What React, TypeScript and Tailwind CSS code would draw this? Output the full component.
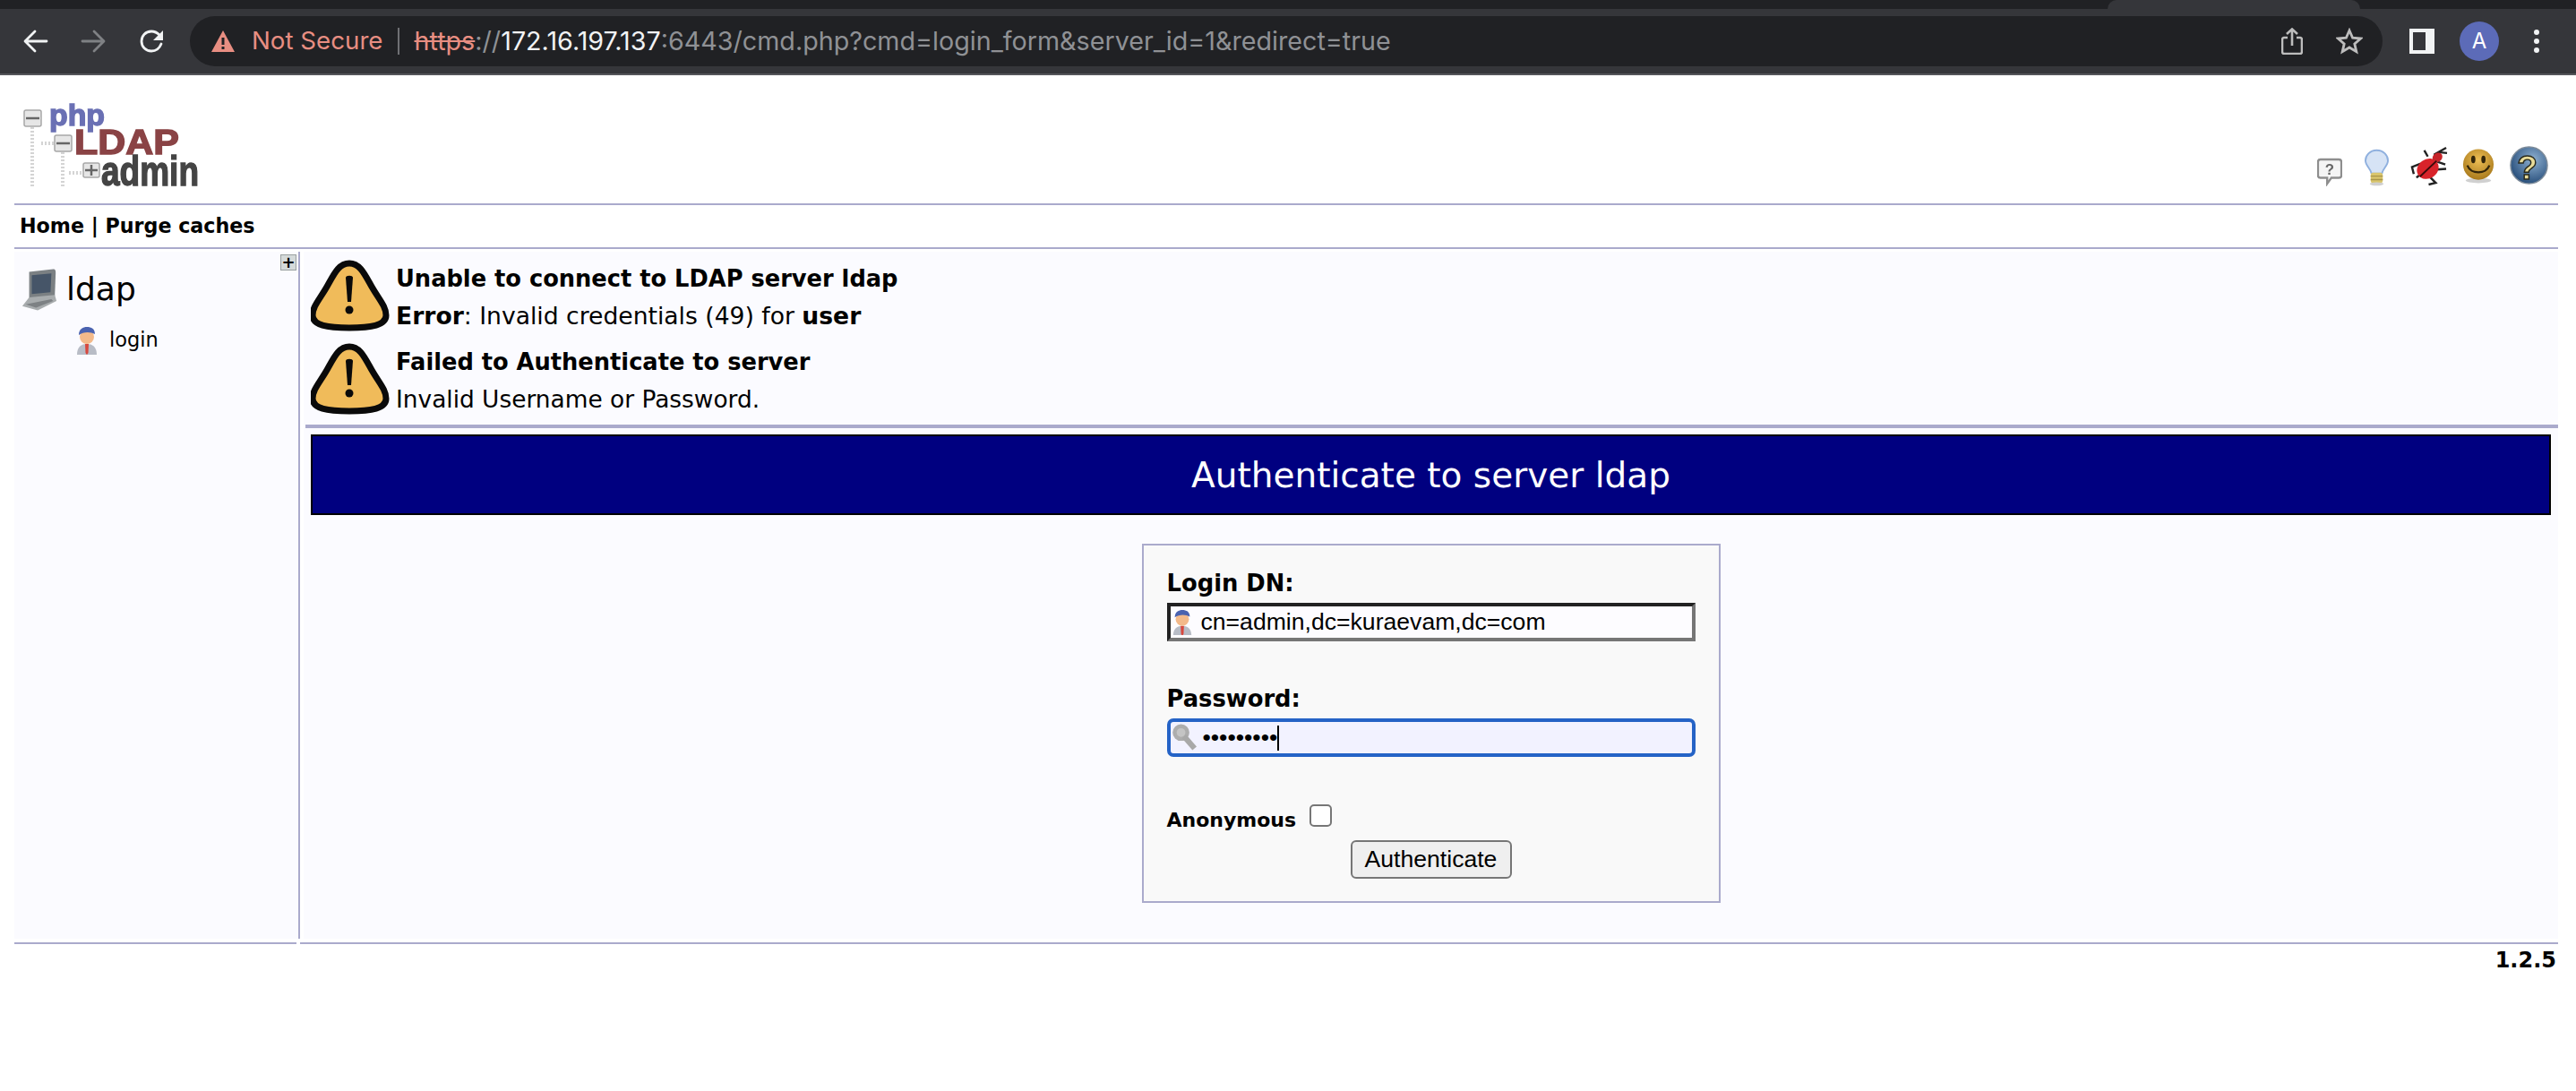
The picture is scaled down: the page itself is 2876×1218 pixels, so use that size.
const pageFont = "font-['DejaVu_Sans',sans-serif]";

function WarningIcon() {
  return (
    <svg width="88" height="80" viewBox="0 0 88 80" className="shrink-0">
      <path
        d="M43 4 C55 4 60 16 68 30 C76 44 84 52 84 62 C84 73 68 76 43 76 C18 76 2 73 2 62 C2 52 10 44 18 30 C26 16 31 4 43 4 Z"
        fill="#f0bb5a"
        stroke="#0a0a0a"
        strokeWidth="7"
      />
      <path d="M39 20 C39 17 47 17 47 20 L45 47 L41 47 Z" fill="#0a0a0a" />
      <circle cx="43" cy="56" r="4.5" fill="#0a0a0a" />
    </svg>
  );
}

function UserIcon({ size = 28 }: { size?: number }) {
  return (
    <svg width={size} height={size * 1.15} viewBox="0 0 28 32" className="shrink-0 blur-[0.4px]">
      <path d="M3 32 C3 23 8 20 14 20 C20 20 25 23 25 32 Z" fill="#b8bcc6" />
      <path d="M12 20 L16 20 L15.5 30 L14 32 L12.5 30 Z" fill="#d8483e" />
      <circle cx="14" cy="12" r="8" fill="#f3b98a" />
      <path d="M5 10 C5 3 10 1 14 1 C19 1 23 3 23 9 C18 6 10 6 5 10 Z" fill="#4a62b0" />
    </svg>
  );
}

function KeyIcon() {
  return (
    <svg width="32" height="32" viewBox="0 0 32 36" className="shrink-0 blur-[0.6px]">
      <circle cx="11" cy="11" r="8" fill="#c4c4c4" stroke="#adadad" strokeWidth="5" />
      <path d="M15 16 L28 31" stroke="#a8a8a8" strokeWidth="7" />
    </svg>
  );
}

function ComputerIcon() {
  return (
    <svg width="42" height="49" viewBox="0 0 44 50" className="shrink-0 blur-[0.5px]">
      <path d="M10 4 L38 1 C41 1 41 3 41 6 L40 32 L10 35 Z" fill="#7b8083" />
      <path d="M13 8 L36 6 L35 28 L13 30 Z" fill="#465568" />
      <path d="M10 34 L40 31 L42 38 L20 49 L2 44 Z" fill="#a8acae" />
      <path d="M6 42 L36 36 L38 38 L18 46 Z" fill="#7d8184" />
    </svg>
  );
}

function ChatHelpIcon() {
  return (
    <svg width="28" height="32" viewBox="0 0 30 34" className="shrink-0 blur-[0.5px]">
      <path d="M4 2 H26 C28 2 29 3 29 5 V21 C29 23 28 24 26 24 H17 L12 31 V24 H4 C2 24 1 23 1 21 V5 C1 3 2 2 4 2 Z" fill="#f4f4f4" stroke="#8e8e8e" strokeWidth="2.5" />
      <text x="15" y="20" textAnchor="middle" fontSize="18" fontWeight="700" fill="#666" fontFamily="Liberation Sans">?</text>
    </svg>
  );
}

function BulbIcon() {
  return (
    <svg width="27" height="42" viewBox="0 0 28 42" className="shrink-0 blur-[0.5px]">
      <path d="M14 1 C22 1 27 7 27 13 C27 19 21 22 20 28 H8 C7 22 1 19 1 13 C1 7 6 1 14 1 Z" fill="#d6e3f5" stroke="#8fb0de" strokeWidth="2" />
      <rect x="7" y="27" width="14" height="12" rx="3" fill="#d9c56c" />
      <path d="M7 31 H21 M7 35 H21" stroke="#a8954a" strokeWidth="1.5" />
      <ellipse cx="14" cy="40" rx="8" ry="2" fill="#cfcfcf" />
    </svg>
  );
}

function BugIcon() {
  return (
    <svg width="43" height="45" viewBox="0 0 44 46" className="shrink-0 blur-[0.4px]">
      <path d="M13 20 L3 24 L5 32 M16 30 L8 36 M24 36 L30 42 L22 44 M28 27 L42 26 M32 18 L41 21 M28 10 L42 2 M33 7 L43 8 M21 12 L17 5" stroke="#222" strokeWidth="2.5" fill="none" />
      <ellipse cx="21" cy="26" rx="13" ry="11" transform="rotate(-35 21 26)" fill="#d8232a" />
      <ellipse cx="32" cy="13" rx="6" ry="5" transform="rotate(-35 32 13)" fill="#c7242a" />
      <path d="M12 35 L31 17" stroke="#3a0a0a" strokeWidth="2" />
    </svg>
  );
}

function SmileIcon() {
  return (
    <svg width="36" height="39" viewBox="0 0 38 40" className="mb-[3px] shrink-0 blur-[0.4px]">
      <defs>
        <radialGradient id="smile" cx="50%" cy="35%" r="65%">
          <stop offset="0%" stopColor="#eebf55" />
          <stop offset="100%" stopColor="#a97a1c" />
        </radialGradient>
      </defs>
      <ellipse cx="19" cy="37" rx="15" ry="3" fill="#d0d0d0" />
      <circle cx="19" cy="18" r="18" fill="url(#smile)" />
      <ellipse cx="13" cy="12" rx="2.5" ry="4.5" fill="#33260a" />
      <ellipse cx="25" cy="12" rx="2.5" ry="4.5" fill="#33260a" />
      <path d="M6 19 C10 30 28 30 32 19" stroke="#33260a" strokeWidth="2.5" fill="none" />
    </svg>
  );
}

function HelpIcon() {
  return (
    <svg width="43" height="45" viewBox="0 0 44 46" className="shrink-0 blur-[0.4px]">
      <defs>
        <radialGradient id="globe" cx="60%" cy="35%" r="70%">
          <stop offset="0%" stopColor="#8fb1d2" />
          <stop offset="100%" stopColor="#234a77" />
        </radialGradient>
      </defs>
      <circle cx="22" cy="22" r="21" fill="url(#globe)" stroke="#7d8b99" strokeWidth="1.5" />
      <text x="20" y="38" textAnchor="middle" fontSize="38" fontWeight="700" fill="#e9dc9a" stroke="#2a2a1c" strokeWidth="1.5" fontFamily="Liberation Sans">?</text>
    </svg>
  );
}

function LogoBox({ x, y, w, h, plus }: { x: number; y: number; w: number; h: number; plus?: boolean }) {
  return (
    <g>
      <rect x={x} y={y} width={w} height={h} rx="2" fill="#e6e6e6" stroke="#a8a8a8" strokeWidth="1.5" />
      <path d={`M${x + 2} ${y + h / 2} H${x + w - 2}`} stroke="#666" strokeWidth="2.5" />
      {plus && <path d={`M${x + w / 2} ${y + 2} V${y + h - 2}`} stroke="#666" strokeWidth="2.5" />}
    </g>
  );
}

function Logo() {
  return (
    <svg width="200" height="100" viewBox="0 0 200 100" className="shrink-0 blur-[0.5px]">
      <path d="M11 32 V98 M45 60 V98 M21 50 H36 M52 83 H68" stroke="#d4d4d4" strokeWidth="4" strokeDasharray="2 2" fill="none" />
      <LogoBox x={2} y={13} w={19} h={18} />
      <LogoBox x={36} y={41} w={19} h={18} />
      <LogoBox x={68} y={72} w={18} h={16} plus />
      <text x="30" y="30" fontFamily="Liberation Sans" fontWeight="700" fontSize="33" fill="#6a70b4" stroke="#6a70b4" strokeWidth="1.4" textLength="62" lengthAdjust="spacingAndGlyphs">php</text>
      <text x="58" y="62" fontFamily="Liberation Sans" fontWeight="700" fontSize="38" fill="#8a4345" stroke="#8a4345" strokeWidth="1.4" textLength="117" lengthAdjust="spacingAndGlyphs">LDAP</text>
      <text x="88" y="97" fontFamily="Liberation Sans" fontWeight="700" fontSize="46" fill="#444444" stroke="#444444" strokeWidth="1.4" textLength="109" lengthAdjust="spacingAndGlyphs">admin</text>
    </svg>
  );
}

function BrowserBar() {
  return (
    <div className="shrink-0 font-['Inter',sans-serif]">
      <div className="h-[10px] bg-[#202124] pl-[2353px]">
        <div className="h-full w-[282px] rounded-t-[10px] bg-[#35363a]" />
      </div>
      <div className="flex h-[72px] items-center bg-[#35363a]">
        <svg className="ml-[26px]" width="28" height="26" viewBox="0 0 28 26" fill="none" stroke="#f1f3f4" strokeWidth="2.8" strokeLinecap="round" strokeLinejoin="round">
          <path d="M26 13 H3 M13 2 L2 13 L13 24" />
        </svg>
        <svg className="ml-[36px]" width="28" height="26" viewBox="0 0 28 26" fill="none" stroke="#7f8184" strokeWidth="2.8" strokeLinecap="round" strokeLinejoin="round">
          <path d="M2 13 H25 M15 2 L26 13 L15 24" />
        </svg>
        <svg className="ml-[37px]" width="28" height="26" viewBox="0 0 28 26">
          <path d="M23 6 C20 3 17 2 14 2 C7.5 2 3 7 3 13 C3 19 7.5 24 14 24 C19 24 23 21 25 16" fill="none" stroke="#f1f3f4" strokeWidth="2.8" strokeLinecap="round" />
          <path d="M27 1 V12 H16 Z" fill="#f1f3f4" />
        </svg>
        <div className="ml-[29px] flex h-[56px] w-[2448px] items-center rounded-full bg-[#202124] pl-[23px] text-[28.7px]">
          <svg width="28" height="26" viewBox="0 0 28 26">
            <path d="M14 1 L27 25 H1 Z" fill="#e88e82" />
            <rect x="12.5" y="9" width="3" height="8" fill="#202124" />
            <rect x="12.5" y="19" width="3" height="3" fill="#202124" />
          </svg>
          <span className="ml-[18px] text-[27.7px] text-[#e88e82]">Not Secure</span>
          <span className="ml-[16px] mr-[17px] h-[30px] w-[2px] bg-[#6f7074]" />
          <span className="text-[#e88e82] line-through">https</span>
          <span className="text-[#8f9195]">://</span>
          <span className="text-[#f1f3f4]">172.16.197.137</span>
          <span className="text-[#8f9195]">:6443/cmd.php?cmd=login_form&amp;server_id=1&amp;redirect=true</span>
          <svg className="ml-auto" width="24" height="30" viewBox="0 0 24 30" fill="none" stroke="#bdbdbd" strokeWidth="2.6">
            <path d="M7 11 H3 C2 11 1 12 1 13 V27 C1 28 2 29 3 29 H21 C22 29 23 28 23 27 V13 C23 12 22 11 21 11 H17" />
            <path d="M12 20 V2 M6 7 L12 1.5 L18 7" />
          </svg>
          <svg className="ml-[37px] mr-[22px]" width="30" height="30" viewBox="0 0 30 30" fill="none" stroke="#bdbdbd" strokeWidth="2.8">
            <path d="M15 3 L18.6 11.2 L27.5 12 L20.8 17.9 L22.8 26.6 L15 22 L7.2 26.6 L9.2 17.9 L2.5 12 L11.4 11.2 Z" />
          </svg>
        </div>
        <div className="ml-[30px] flex h-[28px] w-[28px] border-[4px] border-[#f1f3f4] bg-[#f1f3f4]">
          <div className="h-full w-[14px] bg-[#35363a]" />
        </div>
        <div className="ml-[28px] flex h-[44px] w-[44px] items-center justify-center rounded-full bg-[#5c6bb8] text-[24px] text-white">
          A
        </div>
        <div className="ml-[39px] flex flex-col gap-[4px]">
          <span className="h-[6px] w-[6px] rounded-full bg-[#f1f3f4]" />
          <span className="h-[6px] w-[6px] rounded-full bg-[#f1f3f4]" />
          <span className="h-[6px] w-[6px] rounded-full bg-[#f1f3f4]" />
        </div>
      </div>
      <div className="h-[2px] bg-[#55565a]" />
    </div>
  );
}

export default function App() {
  return (
    <div className={`h-[1218px] w-full overflow-hidden bg-white text-black ${pageFont}`}>
      <BrowserBar />

      <div className="pl-[16px] pr-[20px]">
        <div className="flex h-[143px] items-end justify-between pb-[19px] pl-[9px] pr-[11px]">
          <div className="mb-[-2px]">
            <Logo />
          </div>
          <div className="flex items-end">
            <ChatHelpIcon />
            <div className="ml-[25px]">
              <BulbIcon />
            </div>
            <div className="ml-[23px]">
              <BugIcon />
            </div>
            <div className="ml-[16px]">
              <SmileIcon />
            </div>
            <div className="ml-[17px]">
              <HelpIcon />
            </div>
          </div>
        </div>

        <div className="flex h-[51px] items-center border-y-2 border-[#aaaacc] pl-[6px] text-[22.2px] font-bold">
          Home | Purge caches
        </div>

        <div className="mt-[3px] flex h-[767px]">
          <div className="relative w-[319px] shrink-0 border-r-2 border-[#aaaacc] bg-[#fbfbff]">
            <div className="absolute right-[2px] top-[3px] flex h-[18px] w-[18px] items-center justify-center border border-[#9aa0a0] bg-[#d5dada] text-[18px] font-bold leading-none">
              +
            </div>
            <div className="flex items-center pl-[7px] pt-[17px] text-[36px] leading-[50px]">
              <ComputerIcon />
              <span className="ml-[9px]">ldap</span>
            </div>
            <div className="mt-[15px] flex items-center pl-[67px] text-[22.5px]">
              <UserIcon />
              <span className="ml-[11px]">login</span>
            </div>
          </div>

          <div className="ml-[4px] flex-1 bg-[#fbfbff] px-[8px] pt-[9px]">
            <div className="flex h-[93px] gap-[7px]">
              <WarningIcon />
              <div className="leading-[42px]">
                <div className="text-[25.7px] font-bold">Unable to connect to LDAP server ldap</div>
                <div className="text-[26.6px]">
                  <b>Error</b>: Invalid credentials (49) for <b>user</b>
                </div>
              </div>
            </div>
            <div className="flex h-[91px] gap-[7px]">
              <WarningIcon />
              <div className="leading-[42px]">
                <div className="text-[25.7px] font-bold">Failed to Authenticate to server</div>
                <div className="text-[26.4px]">Invalid Username or Password.</div>
              </div>
            </div>
            <div className="ml-[-6px] mr-[-8px] h-[4px] bg-[#aaaacc]" />
            <div className="mt-[7px] flex h-[90px] items-center justify-center border-2 border-black bg-[#000080] pt-[2px] text-[39px] text-white">
              Authenticate to server ldap
            </div>

            <div className="mx-auto mt-[32px] flex h-[401px] w-[646px] flex-col border-2 border-[#aaaacc] bg-[#f9f9f9] px-[26px]">
              <label className="mt-[26px] text-[25.8px] font-bold leading-[32px]">Login DN:</label>
              <div className="mt-[6px] flex h-[43px] items-center border-[4px] border-b-[#767676] border-l-[#222222] border-r-[#767676] border-t-[#222222] bg-[#fdfcff] font-['Liberation_Sans',sans-serif] text-[26.6px]">
                <UserIcon size={26} />
                <span className="ml-[8px]">cn=admin,dc=kuraevam,dc=com</span>
              </div>
              <label className="mt-[48px] text-[25.8px] font-bold leading-[32px]">Password:</label>
              <div className="mt-[6px] flex h-[43px] items-center rounded-[7px] border-[4px] border-[#2563c6] bg-[#f2f2ff] font-['Liberation_Sans',sans-serif] text-[26.6px]">
                <KeyIcon />
                <span className="ml-[4px]">•••••••••</span>
                <span className="h-[28px] w-[2px] bg-black" />
              </div>
              <div className="mt-[53px] flex items-start">
                <span className="mt-[5px] text-[22px] font-bold leading-[25px]">Anonymous</span>
                <span className="ml-[15px] h-[25px] w-[25px] rounded-[5px] border-2 border-[#767676] bg-white" />
              </div>
              <button className="mx-auto mt-[10px] h-[43px] w-[180px] rounded-[6px] border-2 border-[#767676] bg-[#efefef] font-['Liberation_Sans',sans-serif] text-[26.6px]">
                Authenticate
              </button>
            </div>
          </div>
        </div>

        <div className="mt-[4px] flex gap-[4px]">
          <div className="h-[2px] w-[315px] bg-[#aaaacc]" />
          <div className="h-[2px] flex-1 bg-[#aaaacc]" />
        </div>
        <div className="pr-[2px] pt-[3px] text-right text-[24px] font-bold leading-[30px]">1.2.5</div>
      </div>
    </div>
  );
}
